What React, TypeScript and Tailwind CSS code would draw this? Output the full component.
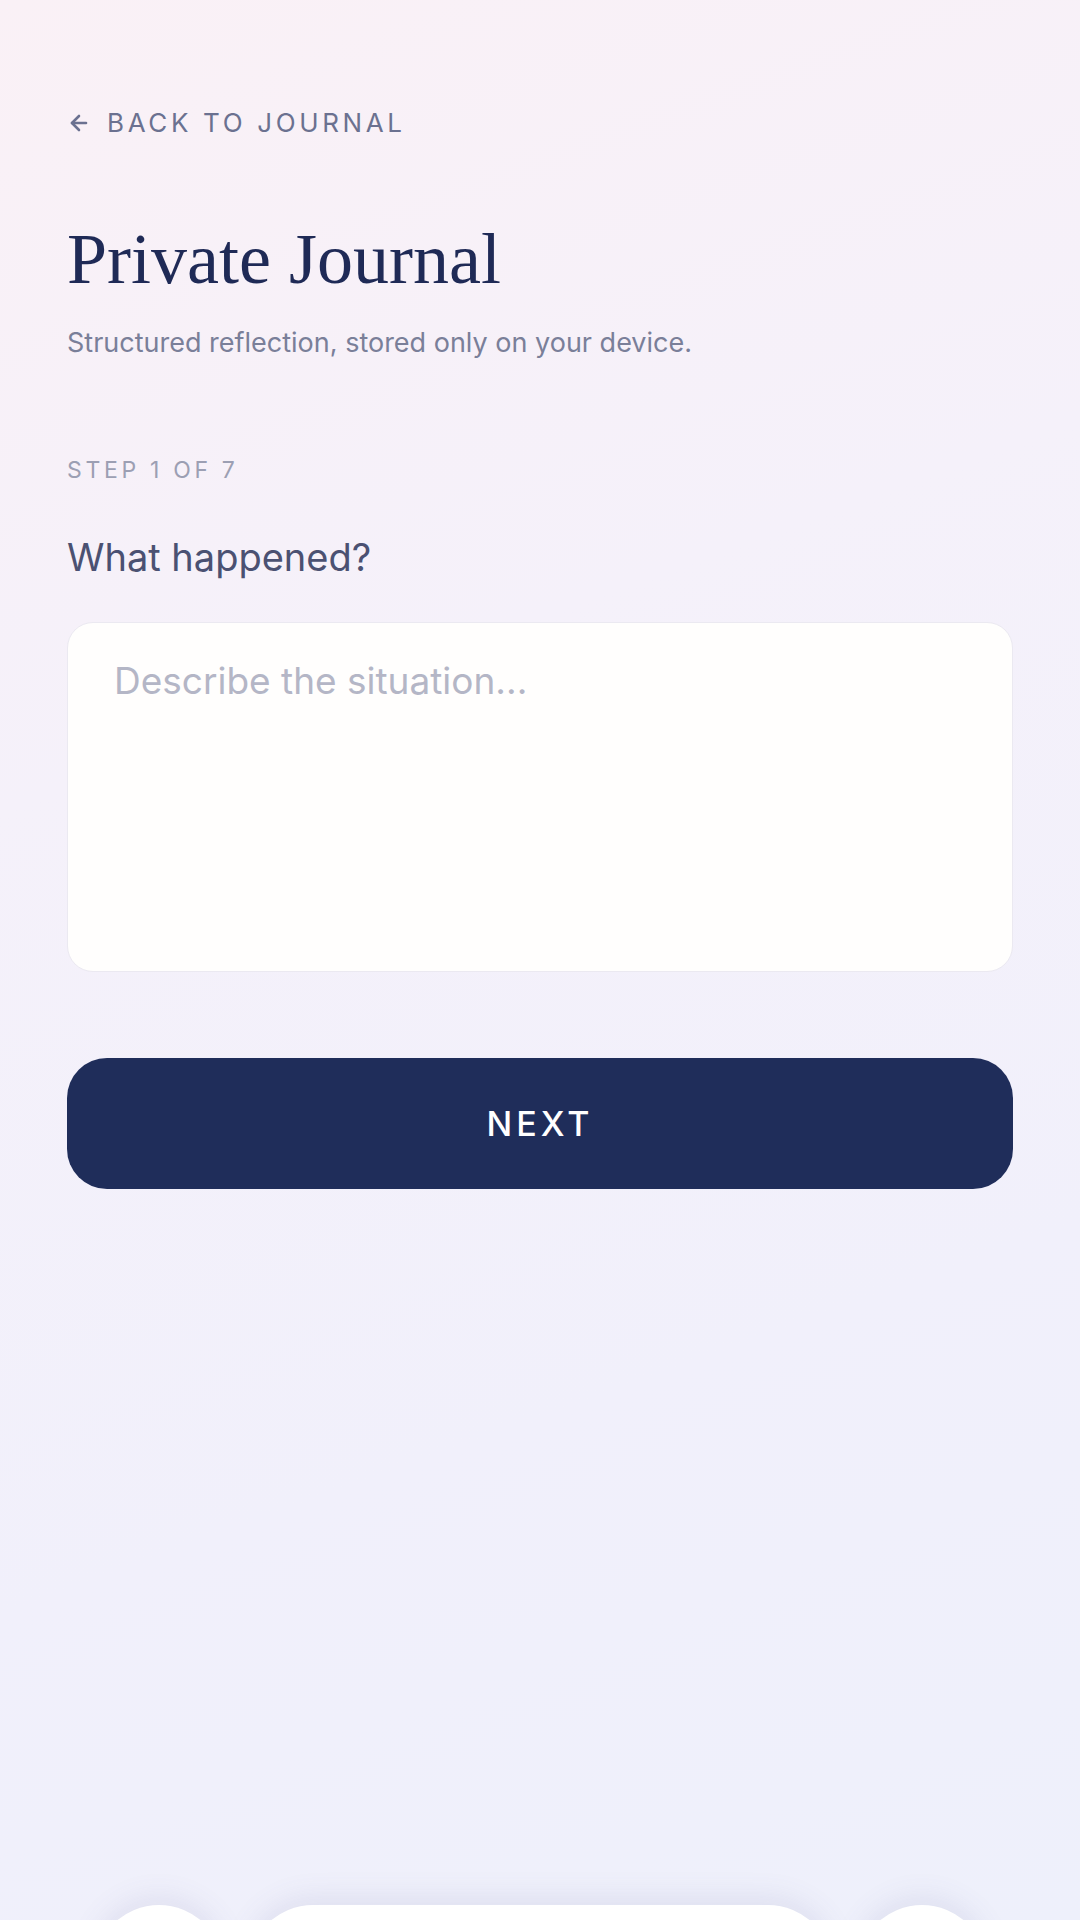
import { ArrowLeft } from 'lucide-react';

const sans = "font-['Inter','Noto_Sans',sans-serif]";

export default function App() {
  return (
    <div
      className={`relative min-h-[1920px] w-full overflow-hidden bg-[linear-gradient(160deg,#faf1f6_0%,#f5f1fa_35%,#f1f0fb_70%,#eef0fb_100%)] ${sans}`}
    >
      <main className="flex flex-col px-[67px] pt-[110px]">
        {/* Back link */}
        <a href="#" className="flex items-center gap-[16px] text-[#6b7190]">
          <ArrowLeft size={24} strokeWidth={2.6} />
          <span className="text-[26px] leading-none tracking-[0.14em]">BACK TO JOURNAL</span>
        </a>

        <h1 className="mt-[87px] font-['Liberation_Serif','Times_New_Roman',serif] text-[72px] leading-none text-[#1f2a56]">
          Private Journal
        </h1>
        <p className="mt-[34px] text-[27px] leading-none text-[#7a7f99]">
          Structured reflection, stored only on your device.
        </p>

        <div className="mt-[103px] text-[23px] leading-none tracking-[0.16em] text-[#9c9fb3]">STEP 1 OF 7</div>

        <label className="mt-[56px] text-[38px] leading-none text-[#4b5172]">What happened?</label>

        <textarea
          placeholder="Describe the situation..."
          className="mt-[46px] h-[350px] w-full resize-none rounded-[26px] border border-[#ebe9f1] bg-[#fffefd] px-[46px] pt-[32px] text-[37px] leading-[1.4] text-[#3b4060] outline-none placeholder:text-[#b4b6c6]"
        />

        <button className="mt-[86px] flex h-[131px] w-full items-center justify-center rounded-[40px] bg-[#1f2d5a] text-[34px] font-medium tracking-[0.12em] text-white">
          NEXT
        </button>
      </main>

      {/* Floating bottom nav, mostly below the fold */}
      <nav className="absolute left-0 right-0 top-[1905px] flex justify-center gap-6">
        <div className="h-[130px] w-[130px] rounded-full bg-white shadow-[0_-6px_30px_rgba(90,90,150,0.12)]" />
        <div className="h-[130px] w-[585px] rounded-full bg-white shadow-[0_-6px_30px_rgba(90,90,150,0.12)]" />
        <div className="h-[130px] w-[130px] rounded-full bg-white shadow-[0_-6px_30px_rgba(90,90,150,0.12)]" />
      </nav>
    </div>
  );
}
